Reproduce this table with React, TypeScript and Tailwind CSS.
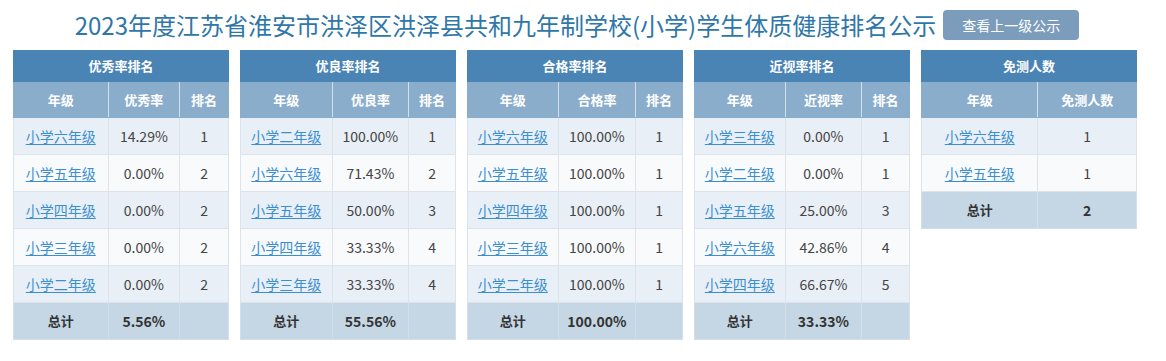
import React from "react";

type Row = { grade: string; value: string; rank?: string };

type Board = {
  title: string;
  col: string;
  widths: number[];
  rows: Row[];
  total: string;
  noRank?: boolean;
};

const boards: Board[] = [
  {
    title: "优秀率排名",
    col: "优秀率",
    widths: [95, 72, 49],
    rows: [
      { grade: "小学六年级", value: "14.29%", rank: "1" },
      { grade: "小学五年级", value: "0.00%", rank: "2" },
      { grade: "小学四年级", value: "0.00%", rank: "2" },
      { grade: "小学三年级", value: "0.00%", rank: "2" },
      { grade: "小学二年级", value: "0.00%", rank: "2" },
    ],
    total: "5.56%",
  },
  {
    title: "优良率排名",
    col: "优良率",
    widths: [92, 77, 47],
    rows: [
      { grade: "小学二年级", value: "100.00%", rank: "1" },
      { grade: "小学六年级", value: "71.43%", rank: "2" },
      { grade: "小学五年级", value: "50.00%", rank: "3" },
      { grade: "小学四年级", value: "33.33%", rank: "4" },
      { grade: "小学三年级", value: "33.33%", rank: "4" },
    ],
    total: "55.56%",
  },
  {
    title: "合格率排名",
    col: "合格率",
    widths: [91, 78, 47],
    rows: [
      { grade: "小学六年级", value: "100.00%", rank: "1" },
      { grade: "小学五年级", value: "100.00%", rank: "1" },
      { grade: "小学四年级", value: "100.00%", rank: "1" },
      { grade: "小学三年级", value: "100.00%", rank: "1" },
      { grade: "小学二年级", value: "100.00%", rank: "1" },
    ],
    total: "100.00%",
  },
  {
    title: "近视率排名",
    col: "近视率",
    widths: [91, 77, 48],
    rows: [
      { grade: "小学三年级", value: "0.00%", rank: "1" },
      { grade: "小学二年级", value: "0.00%", rank: "1" },
      { grade: "小学五年级", value: "25.00%", rank: "3" },
      { grade: "小学六年级", value: "42.86%", rank: "4" },
      { grade: "小学四年级", value: "66.67%", rank: "5" },
    ],
    total: "33.33%",
  },
  {
    title: "免测人数",
    col: "免测人数",
    widths: [117, 99],
    rows: [
      { grade: "小学六年级", value: "1" },
      { grade: "小学五年级", value: "1" },
    ],
    total: "2",
    noRank: true,
  },
];

function RankTable({ b }: { b: Board }) {
  const cols = b.noRank ? 2 : 3;
  return (
    <table className="w-[216px] shrink-0 border-collapse table-fixed text-center">
      <colgroup>
        {b.widths.map((w, i) => (
          <col key={i} style={{ width: `${(w / 216) * 100}%` }} />
        ))}
      </colgroup>
      <thead>
        <tr className="h-[31px] bg-[#4a84b5] text-white">
          <th colSpan={cols} className="text-[13px] font-bold border border-[#4a84b5]">
            {b.title}
          </th>
        </tr>
        <tr className="h-[36px] bg-[#8badcc] text-white text-[13px] font-bold">
          <th className="border border-[#8badcc] border-r-[#d4e0ec]">年级</th>
          <th className={`border border-[#8badcc] ${b.noRank ? "" : "border-r-[#d4e0ec]"}`}>{b.col}</th>
          {!b.noRank && <th className="border border-[#8badcc]">排名</th>}
        </tr>
      </thead>
      <tbody className="text-[14px] text-[#444]">
        {b.rows.map((r, i) => (
          <tr key={i} className={`h-[37px] ${i % 2 === 0 ? "bg-[#e9eff6]" : "bg-[#f8fafc]"}`}>
            <td className="border border-[#dce3ea]">
              <a href="#" className="text-[#3b8fd0] underline underline-offset-2 decoration-[#3b8fd0]">
                {r.grade}
              </a>
            </td>
            <td className="border border-[#dce3ea]">{r.value}</td>
            {!b.noRank && <td className="border border-[#dce3ea]">{r.rank}</td>}
          </tr>
        ))}
        <tr className="h-[37px] bg-[#c5d6e5] font-bold text-[#333]">
          <td className="border border-[#d4dee8] text-[13px]">总计</td>
          <td className="border border-[#d4dee8]">{b.total}</td>
          {!b.noRank && <td className="border border-[#d4dee8]"></td>}
        </tr>
      </tbody>
    </table>
  );
}

export default function App() {
  return (
    <div
      className="w-[1166px] h-[361px] bg-white"
      style={{ fontFamily: '"Noto Sans CJK SC", "Noto Sans", sans-serif' }}
    >
      {/* title bar */}
      <div className="flex items-center justify-center gap-[7px] pt-[8px] h-[50px] pb-[8px] pr-[12px]">
        <h1 className="text-[24px] leading-[30px] text-[#2f77a8]">
          2023年度江苏省淮安市洪泽区洪泽县共和九年制学校(小学)学生体质健康排名公示
        </h1>
        <button className="h-[30px] px-[19px] rounded-[4px] bg-[#7b9cbb] text-white text-[14px]">
          查看上一级公示
        </button>
      </div>

      {/* ranking tables */}
      <div className="flex items-start gap-[11px] pl-[13px]">
        {boards.map((b) => (
          <RankTable key={b.title} b={b} />
        ))}
      </div>
    </div>
  );
}
